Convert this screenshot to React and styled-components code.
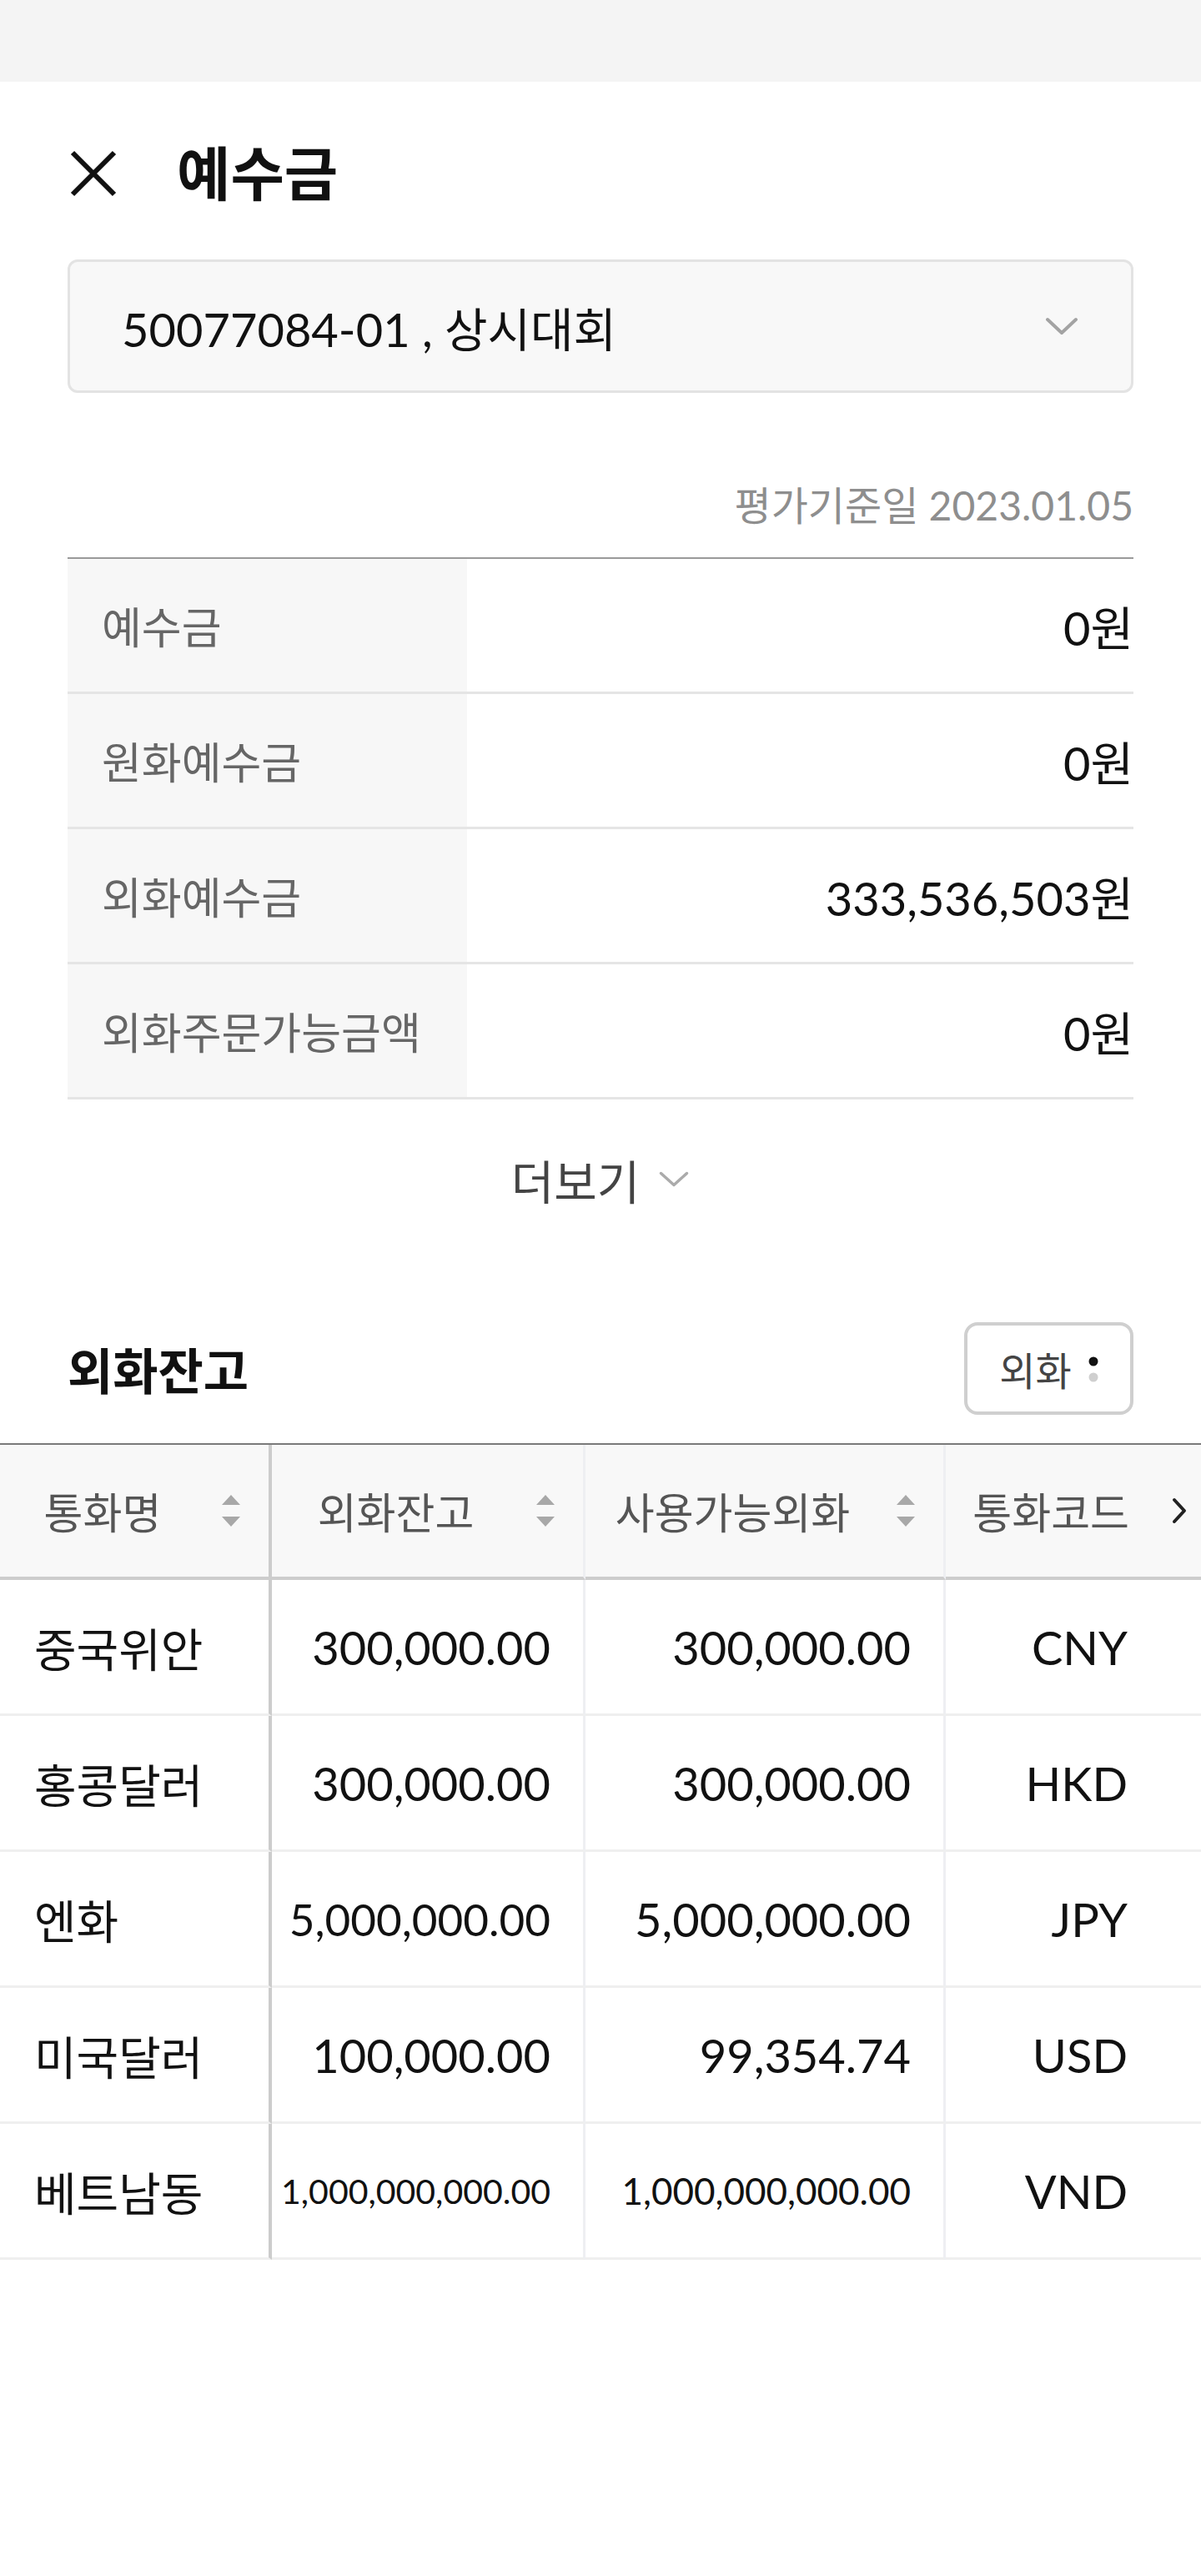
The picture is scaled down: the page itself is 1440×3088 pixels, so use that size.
import React from 'react';
import styled, { createGlobalStyle } from 'styled-components';

const deposits = [
  { label: '예수금', value: '0원' },
  { label: '원화예수금', value: '0원' },
  { label: '외화예수금', value: '333,536,503원' },
  { label: '외화주문가능금액', value: '0원' },
];

const balances = [
  { name: '중국위안', total: '300,000.00', usable: '300,000.00', code: 'CNY' },
  { name: '홍콩달러', total: '300,000.00', usable: '300,000.00', code: 'HKD' },
  { name: '엔화', total: '5,000,000.00', totalSize: 53, usable: '5,000,000.00', usableSize: 56, code: 'JPY' },
  { name: '미국달러', total: '100,000.00', usable: '99,354.74', code: 'USD' },
  { name: '베트남동', total: '1,000,000,000.00', totalSize: 41, usable: '1,000,000,000.00', usableSize: 44, code: 'VND' },
];

const CloseIcon = () => (
  <svg width="56" height="56" viewBox="0 0 56 56">
    <path d="M3 3 L53 53 M53 3 L3 53" stroke="#111" strokeWidth="6" fill="none" />
  </svg>
);

const ChevronDown = ({ w, h, color, stroke }) => (
  <svg width={w} height={h} viewBox={`0 0 ${w} ${h}`}>
    <path
      d={`M${stroke} ${stroke} L${w / 2} ${h - stroke} L${w - stroke} ${stroke}`}
      stroke={color}
      strokeWidth={stroke}
      strokeLinecap="round"
      strokeLinejoin="round"
      fill="none"
    />
  </svg>
);

const SortIcon = () => (
  <svg width="22" height="38" viewBox="0 0 22 38">
    <path d="M11 0 L22 12 L0 12 Z M0 26 L22 26 L11 38 Z" fill="#a8a8a8" />
  </svg>
);

const DotsIcon = () => (
  <svg width="12" height="32" viewBox="0 0 12 32">
    <circle cx="6" cy="7" r="5.5" fill="#111" />
    <circle cx="6" cy="26" r="5.5" fill="#cfcfcf" />
  </svg>
);

const App = () => {
  return (
    <Page>
      <GlobalStyle />
      <TopBand />
      <Content>
        <Header>
          <CloseIcon />
          <Title>예수금</Title>
        </Header>
        <Select>
          <span>50077084-01 , 상시대회</span>
          <ChevronDown w={42} h={24} color="#a3a3a3" stroke={4} />
        </Select>
        <DateLine>평가기준일 2023.01.05</DateLine>
        <InfoTable>
          {deposits.map((d) => (
            <InfoRow key={d.label}>
              <InfoLabel>{d.label}</InfoLabel>
              <InfoValue>{d.value}</InfoValue>
            </InfoRow>
          ))}
        </InfoTable>
        <MoreButton>
          더보기
          <ChevronDown w={38} h={21} color="#ababab" stroke={3.5} />
        </MoreButton>
      </Content>

      <SectionHead>
        <SectionTitle>외화잔고</SectionTitle>
        <FilterButton>
          외화
          <DotsIcon />
        </FilterButton>
      </SectionHead>

      <TableWrap>
        <Grid>
          <HeadCell $first>
            <HeadLabel>통화명</HeadLabel>
            <SortIcon />
          </HeadCell>
          <HeadCell>
            <HeadLabel>외화잔고</HeadLabel>
            <SortIcon />
          </HeadCell>
          <HeadCell>
            <HeadLabel>사용가능외화</HeadLabel>
            <SortIcon />
          </HeadCell>
          <HeadCell $end>
            <span>통화코드</span>
          </HeadCell>
          <HeadCell $filler />

          {balances.map((b) => (
            <React.Fragment key={b.code}>
              <Cell $first>{b.name}</Cell>
              <Cell $num $size={b.totalSize}>{b.total}</Cell>
              <Cell $num $size={b.usableSize}>{b.usable}</Cell>
              <Cell $num $end>{b.code}</Cell>
              <Cell $filler />
            </React.Fragment>
          ))}
        </Grid>
        <ScrollHint>
          <svg width="18" height="32" viewBox="0 0 18 32">
            <path d="M3 3 L15 16 L3 29" stroke="#222" strokeWidth="4" strokeLinecap="round" strokeLinejoin="round" fill="none" />
          </svg>
        </ScrollHint>
      </TableWrap>
    </Page>
  );
};

// Styled components
const GlobalStyle = createGlobalStyle`
  * { box-sizing: border-box; }
  body {
    margin: 0;
    background: #fff;
    color: #111;
    font-family: "Lato", "Noto Sans CJK KR", sans-serif;
  }
`;

const Page = styled.div`
  width: 1440px;
  min-height: 3088px;
  overflow: hidden;
  background: #fff;
`;

const TopBand = styled.div`
  height: 98px;
  background: #f4f4f4;
`;

const Content = styled.div`
  padding: 0 81px;
`;

const Header = styled.div`
  display: flex;
  align-items: center;
  gap: 72px;
  height: 64px;
  margin-top: 78px;
  padding-left: 3px;
`;

const Title = styled.h1`
  margin: 0;
  font-size: 70px;
  font-weight: 700;
  line-height: 1;
  color: #111;
`;

const Select = styled.div`
  display: flex;
  align-items: center;
  justify-content: space-between;
  height: 160px;
  margin-top: 71px;
  padding: 0 62px;
  background: #f8f8f8;
  border: 3px solid #e3e3e3;
  border-radius: 12px;
  font-size: 56px;
  color: #111;
`;

const DateLine = styled.div`
  margin-top: 105px;
  text-align: right;
  font-size: 48px;
  line-height: 60px;
  color: #8e8e8e;
`;

const InfoTable = styled.div`
  margin-top: 32px;
  border-top: 2px solid #9a9a9a;
`;

const InfoRow = styled.div`
  display: flex;
  height: 162px;
  border-bottom: 3px solid #e5e5e5;
`;

const InfoLabel = styled.div`
  display: flex;
  align-items: center;
  width: 479px;
  padding-left: 41px;
  background: #f7f7f7;
  font-size: 52px;
  color: #666;
`;

const InfoValue = styled.div`
  flex: 1;
  display: flex;
  align-items: center;
  justify-content: flex-end;
  font-size: 56px;
  color: #111;
`;

const MoreButton = styled.div`
  display: flex;
  align-items: center;
  justify-content: center;
  gap: 22px;
  height: 190px;
  font-size: 56px;
  color: #444;
`;

const SectionHead = styled.div`
  display: flex;
  align-items: center;
  justify-content: space-between;
  height: 111px;
  margin-top: 77px;
  padding: 0 81px;
`;

const SectionTitle = styled.h2`
  margin: 0;
  font-size: 59px;
  font-weight: 700;
  color: #111;
`;

const FilterButton = styled.div`
  display: flex;
  align-items: center;
  justify-content: center;
  gap: 20px;
  width: 203px;
  height: 111px;
  border: 4px solid #cfcfcf;
  border-radius: 16px;
  background: #fff;
  font-size: 47px;
  color: #444;
`;

const TableWrap = styled.div`
  position: relative;
  margin-top: 34px;
  border-top: 2px solid #7a7a7a;
  overflow: hidden;
`;

const Grid = styled.div`
  display: grid;
  grid-template-columns: 326px 376px 432px 260px 1fr;
`;

const columnBorder = (p) =>
  p.$first ? '4px solid #cccccc' : p.$filler || p.$end ? 'none' : '3px solid #eeeff2';

const HeadCell = styled.div`
  display: flex;
  align-items: center;
  justify-content: ${(p) => (p.$end ? 'flex-end' : 'flex-start')};
  height: 162px;
  padding: ${(p) => (p.$end ? '0 40px 0 0' : '0 34px 0 0')};
  background: #f8f8f8;
  border-bottom: 4px solid #cdcdcd;
  border-right: ${columnBorder};
  font-size: 51px;
  color: #555;
  white-space: nowrap;
`;

const HeadLabel = styled.span`
  flex: 1;
  margin-right: 20px;
  text-align: center;
`;

const Cell = styled.div`
  display: flex;
  align-items: center;
  justify-content: ${(p) => (p.$num ? 'flex-end' : 'flex-start')};
  height: 163px;
  padding: ${(p) => (p.$end ? '0 42px 0 0' : p.$num ? '0 39px 0 0' : '0 0 0 41px')};
  border-bottom: 3px solid #efefef;
  border-right: ${columnBorder};
  font-size: ${(p) => (p.$first ? 55 : p.$size || 56)}px;
  color: #111;
  white-space: nowrap;
`;

const ScrollHint = styled.div`
  position: absolute;
  top: 0;
  right: 0;
  display: flex;
  align-items: center;
  justify-content: flex-end;
  width: 64px;
  height: 158px;
  padding-right: 17px;
  background: linear-gradient(to right, rgba(248, 248, 248, 0), #f8f8f8 45%);
`;

export default App;
